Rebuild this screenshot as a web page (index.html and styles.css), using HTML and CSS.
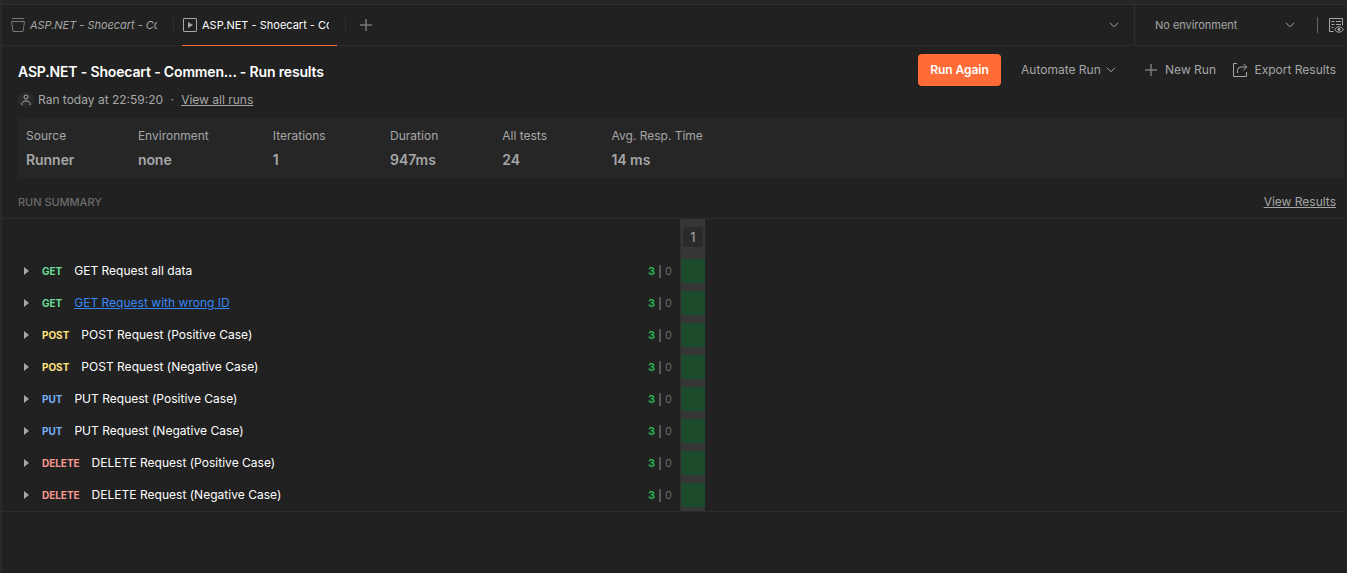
FILE: index.html
```html
<!DOCTYPE html>
<html lang="en">
<head>
<meta charset="utf-8">
<title>Run results</title>
<link rel="stylesheet" href="styles.css">
</head>
<body>
<div class="window">
  <div class="topbar"></div>
  <div class="tabbar">
    <div class="tab tab-preview">
      <svg class="icon" width="14" height="14" viewBox="0 0 14 14"><path d="M1 .5h12M.5 3.500h13l-1.500 10H2z"/></svg>
      <span class="tab-name">ASP.NET - Shoecart - Comment</span>
    </div>
    <div class="tab tab-active">
      <svg class="icon" width="14" height="14" viewBox="0 0 14 14"><rect x=".5" y=".5" width="13" height="13" rx=".5"/><path class="solid" d="M5 4l5 3-5 3z"/></svg>
      <span class="tab-name">ASP.NET - Shoecart - Comment</span>
    </div>
    <div class="tab-add"><svg class="icon dim" width="12" height="12" viewBox="0 0 12 12"><path d="M6 0v12M0 6h12"/></svg></div>
    <div class="tab-menu"><svg class="icon" width="10" height="6" viewBox="0 0 10 6"><path d="M1 .8l4 4 4-4"/></svg></div>
    <div class="env">
      <span>No environment</span>
      <svg class="icon" width="10" height="6" viewBox="0 0 10 6"><path d="M1 .8l4 4 4-4"/></svg>
    </div>
    <div class="env-view">
      <svg class="icon" width="16" height="16" viewBox="0 0 16 16"><path d="M4.500 13.500H.5V.5h13v7M2.500 3.500h3M7 3.500h5M2.500 6.500h3M7 6.500h5M2.500 9.500h2"/><path d="M5.500 11.500q4.500-5.600 9 0q-4.500 5.600-9 0z"/><circle class="solid" cx="10" cy="11.500" r="1.400"/></svg>
    </div>
  </div>

  <div class="header">
    <div class="heading">
      <h1>ASP.NET - Shoecart - Commen... - Run results</h1>
      <div class="meta">
        <span class="avatar"><svg class="icon" width="10" height="12" viewBox="0 0 10 12"><circle cx="5" cy="3" r="2"/><path d="M.8 11V9.500L3 7h4l2.200 2.500V11"/></svg></span>
        <span>Ran today at 22:59:20</span><span class="dot">·</span><a>View all runs</a>
      </div>
    </div>
    <div class="actions">
      <div class="run">Run Again</div>
      <div class="automate"><span>Automate Run</span><svg class="icon" width="10" height="6" viewBox="0 0 10 6"><path d="M1 .8l4 4 4-4"/></svg></div>
      <div class="new-run"><svg class="icon dim" width="12" height="12" viewBox="0 0 12 12"><path d="M6 0v12M0 6h12"/></svg><span>New Run</span></div>
      <div class="export"><svg class="icon" width="15" height="15" viewBox="0 0 15 15"><path d="M4 .5H.5v13h13V9M4.500 10V7.500q0-3.500 3.500-3.500h5.500M10.500 .8l3.200 3.200-3.200 3.200"/></svg><span>Export Results</span></div>
    </div>
  </div>

  <div class="stats">
    <div class="stat"><span>Source</span><b>Runner</b></div>
    <div class="stat"><span>Environment</span><b>none</b></div>
    <div class="stat"><span>Iterations</span><b>1</b></div>
    <div class="stat"><span>Duration</span><b>947ms</b></div>
    <div class="stat"><span>All tests</span><b>24</b></div>
    <div class="stat"><span>Avg. Resp. Time</span><b>14 ms</b></div>
  </div>

  <div class="summary"><span>RUN SUMMARY</span><a>View Results</a></div>

  <div class="results">
    <div class="requests">
      <div class="request"><i></i><b class="get">GET</b><span>GET Request all data</span><em>3</em><u></u><s>0</s></div>
      <div class="request"><i></i><b class="get">GET</b><span class="hover">GET Request with wrong ID</span><em>3</em><u></u><s>0</s></div>
      <div class="request"><i></i><b class="post">POST</b><span>POST Request (Positive Case)</span><em>3</em><u></u><s>0</s></div>
      <div class="request"><i></i><b class="post">POST</b><span>POST Request (Negative Case)</span><em>3</em><u></u><s>0</s></div>
      <div class="request"><i></i><b class="put">PUT</b><span>PUT Request (Positive Case)</span><em>3</em><u></u><s>0</s></div>
      <div class="request"><i></i><b class="put">PUT</b><span>PUT Request (Negative Case)</span><em>3</em><u></u><s>0</s></div>
      <div class="request"><i></i><b class="delete">DELETE</b><span>DELETE Request (Positive Case)</span><em>3</em><u></u><s>0</s></div>
      <div class="request"><i></i><b class="delete">DELETE</b><span>DELETE Request (Negative Case)</span><em>3</em><u></u><s>0</s></div>
    </div>
    <div class="iteration">
      <div class="number">1</div>
      <div class="cell"></div><div class="cell"></div><div class="cell"></div><div class="cell"></div>
      <div class="cell"></div><div class="cell"></div><div class="cell"></div><div class="cell"></div>
    </div>
  </div>
</div>
</body>
</html>
```
FILE: styles.css
```css
* { box-sizing: border-box; }
body { margin: 0; background: #212121; color: #a6a6a6; font: 12px/16px Inter, sans-serif; overflow: hidden; }
.window { height: 573px; border-left: 2px solid #2a2a2a; border-right: 1px solid #2a2a2a; border-bottom: 1px solid #1b1b1b; }
.icon { display: block; flex: none; fill: none; stroke: #a6a6a6; stroke-width: 1; }
.icon .solid { fill: #a6a6a6; stroke: none; }
.icon.dim { stroke: #7a7a7a; stroke-width: 1.5; }

.topbar { height: 5px; background: #262626; border-bottom: 1px solid #303030; }
.tabbar { display: flex; height: 41px; border-bottom: 1px solid #2c2c2c; align-items: center; font-size: 11px; }
.tab { display: flex; align-items: center; height: 41px; gap: 5px; position: relative; }
.tab-name { width: 127px; overflow: hidden; white-space: nowrap; }
.tab-preview { width: 172px; padding-left: 9px; font-style: italic; }
.tab-preview .tab-name { letter-spacing: -0.03px; }
.tab-preview .icon { stroke: #777; }
.tab-active { width: 172px; padding-left: 9px; color: #fff; }
.tab::after { content: ""; position: absolute; right: 0; top: 12px; height: 17px; width: 1px; background: #2e2e2e; }
.tab-active::before { content: ""; position: absolute; left: 8px; bottom: 0; width: 155px; height: 1px; background: #ff6c37; }
.tab-add { padding-left: 14px; }
.tab-menu { margin-left: auto; padding-right: 15px; }
.env { display: flex; align-items: center; justify-content: space-between; width: 183px; height: 40px; margin-bottom: 1px; padding: 0 22px 0 20px; border-left: 1px solid #303030; letter-spacing: -0.03px; }
.env-view { width: 29px; height: 16px; border-left: 1px solid #666; padding-left: 11px; overflow: hidden; }
.env-view .icon { margin-top: 1px; }

.header { display: flex; justify-content: space-between; height: 72px; padding: 8px 10px 0 16px; }
h1 { margin: 0; padding-top: 8px; font-size: 14px; line-height: 20px; font-weight: 600; letter-spacing: -0.16px; color: #fff; white-space: nowrap; }
.meta { display: flex; align-items: center; height: 16px; margin-top: 10px; white-space: nowrap; }
.avatar { display: flex; align-items: center; justify-content: center; width: 16px; height: 16px; border-radius: 50%; background: #2b2b2b; margin-right: 4px; }
.dot { width: 18px; text-align: center; }
a { text-decoration: underline; text-underline-offset: 1px; }
.actions { display: flex; align-items: center; height: 32px; white-space: nowrap; }
.actions > div { display: flex; align-items: center; }
.run { width: 83px; height: 32px; justify-content: center; background: #ff6c37; color: #fff; border-radius: 4px; font-weight: 600; letter-spacing: -0.05px; }
.automate { width: 95px; margin-left: 20px; justify-content: space-between; }
.new-run { width: 71px; margin-left: 29px; justify-content: space-between; }
.export { width: 103px; margin-left: 17px; justify-content: space-between; }

.stats { display: flex; height: 60px; margin: 0 2px 0 16px; padding: 10px 8px; background: #262626; gap: 64px; }
.stat { white-space: nowrap; }
.stat:first-child { margin-right: -0.5px; }
.stat:nth-child(3) { margin-right: 0.4px; }
.stat:nth-child(5) { margin-right: 0.5px; }
.stat span, .stat b { display: block; }
.stat b { margin-top: 6px; font-size: 14px; line-height: 20px; font-weight: 600; letter-spacing: -0.05px; }

.summary { display: flex; justify-content: space-between; align-items: center; height: 41px; padding: 7px 10px 0 16px; border-bottom: 1px solid #2c2c2c; }
.summary span { font-size: 11px; color: #6b6b6b; font-weight: 500; letter-spacing: -0.03px; }

.results { display: flex; height: 293px; border-bottom: 1px solid #2c2c2c; }
.requests { width: 678px; padding-top: 36px; }
.request { display: flex; align-items: center; height: 32px; padding-left: 22px; color: #fff; }
.request i { border-left: 5px solid #a6a6a6; border-top: 4px solid transparent; border-bottom: 4px solid transparent; margin-right: 13px; }
.request b { font-size: 10px; font-weight: 700; letter-spacing: -0.03px; margin: 0 12px 0 0; }
.request span { letter-spacing: 0.02px; }
.get { color: #6bdd9a; }
.post { color: #ffe47e; }
.put { color: #74aef6; }
.delete { color: #f79a8e; }
.request .hover { color: #3687f5; text-decoration: underline; text-underline-offset: 1px; }
.request em { margin-left: auto; font-style: normal; font-weight: 700; font-size: 11px; color: #26b355; }
.request u { width: 2px; height: 13px; margin: 0 4px; background: #5d554e; }
.request s { width: 7px; margin-right: 8px; text-decoration: none; font-size: 11px; color: #6b6b6b; }
.iteration { width: 25px; border-left: 1px solid #303030; background: #363636; display: flex; flex-direction: column; gap: 8px; }
.number { height: 20px; width: 20px; margin: 8px 2px 4px; border-radius: 3px; background: #2a2a2a; text-align: center; line-height: 21px; font-size: 13px; }
.cell { height: 24px; background: #1c4b2c; }
```
